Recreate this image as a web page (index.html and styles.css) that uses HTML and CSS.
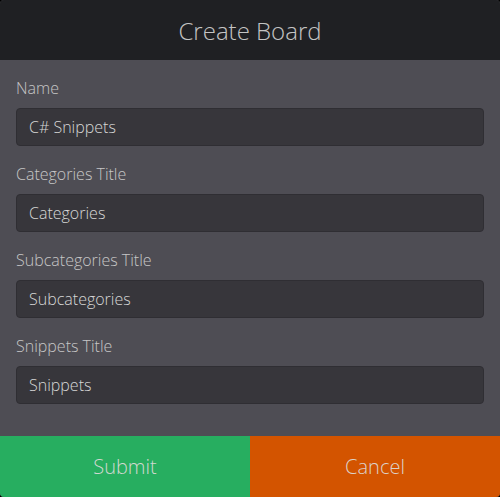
FILE: index.html
```html
<!DOCTYPE html>
<html>
<head>
<meta charset="utf-8">
<link rel="stylesheet" href="styles.css">
</head>
<body>
<div class="modal">
  <div class="header">Create Board</div>
  <form class="form">
    <div class="group">
      <label class="label">Name</label>
      <div class="input">C# Snippets</div>
    </div>
    <div class="group">
      <label class="label">Categories Title</label>
      <div class="input">Categories</div>
    </div>
    <div class="group">
      <label class="label">Subcategories Title</label>
      <div class="input">Subcategories</div>
    </div>
    <div class="group">
      <label class="label">Snippets Title</label>
      <div class="input">Snippets</div>
    </div>
  </form>
  <div class="actions">
    <div class="btn submit">Submit</div>
    <div class="btn cancel">Cancel</div>
  </div>
</div>
</body>
</html>
```

FILE: styles.css
```css
html, body {
  margin: 0;
  padding: 0;
  background: #000;
}
.modal {
  width: 500px;
  height: 497px;
  display: flex;
  flex-direction: column;
  font-family: "Open Sans", "Noto Sans", sans-serif;
  font-weight: 300;
  background: #4e4d54;
  border-radius: 4px;
  overflow: hidden;
}
.header {
  height: 60px;
  background: #1f2023;
  color: #c4c4c4;
  font-size: 24px;
  font-weight: 300;
  display: flex;
  align-items: center;
  justify-content: center;
  flex-shrink: 0;
}
.form {
  flex: 1;
  margin: 0;
  padding: 17px 16px 15px;
  display: flex;
  flex-direction: column;
  gap: 17px;
}
.group {
  display: flex;
  flex-direction: column;
}
.label {
  font-size: 16px;
  line-height: 22px;
  color: #c6c6c6;
  margin-bottom: 9px;
}
.input {
  height: 38px;
  box-sizing: border-box;
  background: #37363b;
  border: 1px solid #2f2e33;
  border-radius: 4px;
  padding: 0 12px;
  color: #d6d6d6;
  font-size: 16px;
  display: flex;
  align-items: center;
}
.actions {
  height: 61px;
  display: flex;
  flex-shrink: 0;
}
.btn {
  flex: 1;
  display: flex;
  align-items: center;
  justify-content: center;
  font-size: 20px;
  color: #d0d8d0;
}
.submit {
  background: #27ae60;
}
.cancel {
  background: #d35400;
  color: #dcd2ca;
}
```
